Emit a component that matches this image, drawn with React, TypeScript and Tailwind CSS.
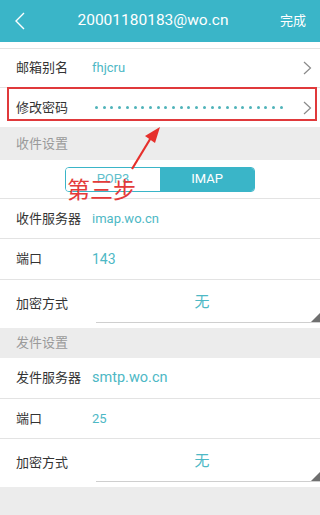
import React from "react";

const TEAL = "#3ab5c8";

function Chevron() {
  return (
    <svg width="9" height="14" viewBox="0 0 9 14" fill="none">
      <path d="M1 1l6.5 6L1 13" stroke="#8a8a8a" strokeWidth="1.2" />
    </svg>
  );
}

function Row({ label, value, valueClass = "text-[14px]", h = "h-[40px]" }: { label: string; value: string; valueClass?: string; h?: string }) {
  return (
    <div className={`flex ${h} items-center border-b border-[#e3e3e3] bg-white pl-4`}>
      <span className="w-[76px] text-[13px] text-[#333]">{label}</span>
      <span className={`${valueClass} text-[#4db8c5]`}>{value}</span>
    </div>
  );
}

function Spinner() {
  return (
    <div className="flex h-[48px] bg-white pl-4">
      <span className="flex h-[47px] w-[80px] items-center text-[13px] text-[#333]">加密方式</span>
      <div className="relative flex h-[43px] flex-1 items-center justify-center border-b border-[#cfcfcf] pr-3 pt-[3px]">
        <span className="text-[15px] text-[#4db8c5]">无</span>
        <svg className="absolute bottom-0 right-0" width="9" height="9" viewBox="0 0 9 9">
          <path d="M9 0V9H0Z" fill="#6f6f6f" />
        </svg>
      </div>
    </div>
  );
}

function Section({ title, h }: { title: string; h: string }) {
  return (
    <div className={`flex ${h} items-center bg-[#ececec] pl-4 text-[13px] text-[#9a9a9a]`}>{title}</div>
  );
}

export default function App() {
  const dots = Array.from({ length: 25 });
  return (
    <div
      className="relative h-[515px] w-[320px] overflow-hidden bg-[#ececec]"
      style={{ fontFamily: "Roboto, 'Noto Sans CJK SC', sans-serif" }}
    >
      {/* header */}
      <div className="flex h-[42px] items-center justify-between px-[14px]" style={{ background: TEAL }}>
        <svg width="12" height="18" viewBox="0 0 12 18" fill="none">
          <path d="M10 1L2 9l8 8" stroke="#fff" strokeWidth="1.4" />
        </svg>
        <span className="text-[15.5px] text-white">20001180183@wo.cn</span>
        <span className="text-[13px] text-white">完成</span>
      </div>
      <div className="h-[7px] border-b border-[#e3e3e3] bg-white" />

      <div className="flex h-[39px] items-center border-b border-[#e3e3e3] bg-white pl-4 pr-[8px]">
        <span className="w-[76px] text-[13px] text-[#333]">邮箱别名</span>
        <span className="flex-1 text-[13px] text-[#4db8c5]">fhjcru</span>
        <Chevron />
      </div>
      <div className="flex h-[39px] items-center bg-white pl-4 pr-[8px]">
        <span className="w-[79px] text-[13px] text-[#333]">修改密码</span>
        <div className="flex w-[188px] justify-between">
          {dots.map((_, i) => (
            <span key={i} className="h-[3px] w-[3px] rounded-full bg-[#4fb3b9]" />
          ))}
        </div>
        <div className="flex flex-1 justify-end">
          <Chevron />
        </div>
      </div>

      <Section title="收件设置" h="h-[33px]" />
      <div className="flex h-[39px] items-center justify-center border-b border-[#e3e3e3] bg-white">
        <div className="flex h-[25px] w-[190px] overflow-hidden rounded-[4px] border border-[#3ab5c8]">
          <div className="flex flex-1 items-center justify-center bg-white text-[13px] text-[#5fbfcc]">POP3</div>
          <div className="flex flex-1 items-center justify-center text-[13px] text-white" style={{ background: TEAL }}>
            IMAP
          </div>
        </div>
      </div>
      <Row label="收件服务器" value="imap.wo.cn" valueClass="text-[13px]" />
      <Row label="端口" value="143" valueClass="text-[14px]" h="h-[41px]" />
      <Spinner />

      <Section title="发件设置" h="h-[30px]" />
      <Row label="发件服务器" value="smtp.wo.cn" valueClass="text-[14.5px]" h="h-[41px]" />
      <Row label="端口" value="25" valueClass="text-[13px]" h="h-[40px]" />
      <Spinner />

      {/* annotation */}
      <div className="absolute left-[7px] top-[87px] h-[34px] w-[310px] border-2 border-[#e0393b]" />
      <svg className="absolute left-0 top-0" width="320" height="515" viewBox="0 0 320 515">
        <path d="M132 169L152 136" stroke="#e6302c" strokeWidth="2.2" />
        <path d="M160 127L145 136L155 143Z" fill="#e6302c" />
      </svg>
      <span className="absolute left-[67px] top-[176px] text-[23px] leading-[30px] text-[#e33b3a]">第三步</span>
    </div>
  );
}
